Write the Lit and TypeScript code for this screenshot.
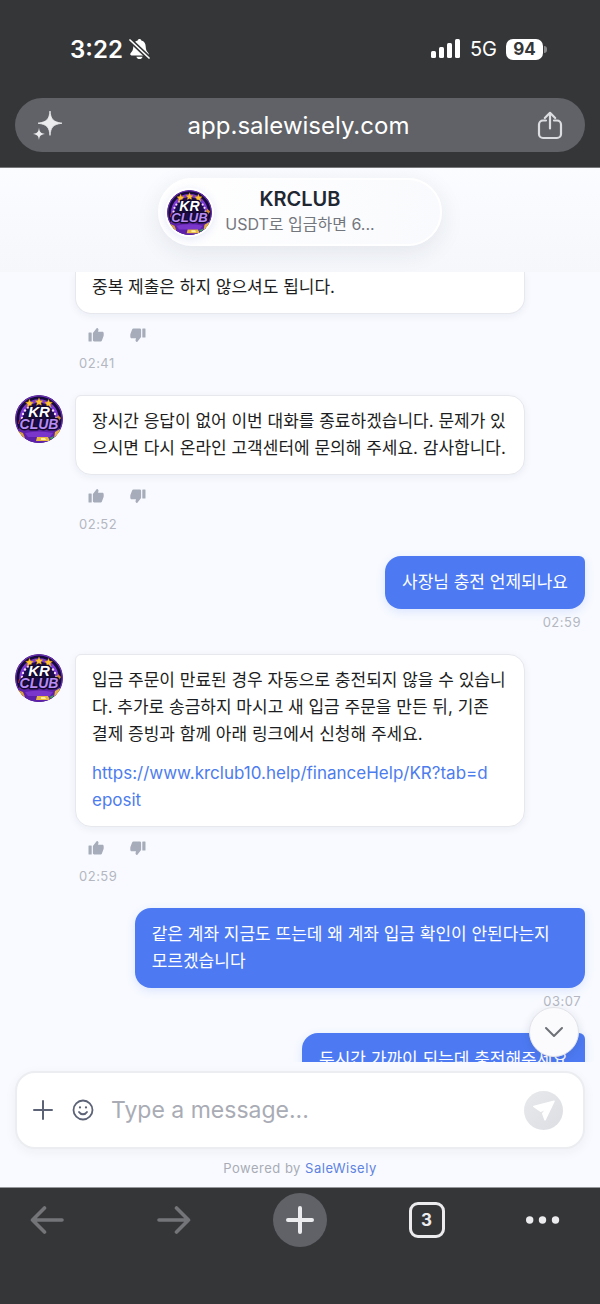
import { LitElement, html, css, svg, nothing } from "lit";
import { customElement, property, state } from "lit/decorators.js";

interface Message {
  from: "agent" | "visitor";
  text: string;
  time?: string;
  link?: string;
  continued?: boolean;
}

const MESSAGES: Message[] = [
  { from: "agent", text: "중복 제출은 하지 않으셔도 됩니다.", time: "02:41", continued: true },
  {
    from: "agent",
    text: "장시간 응답이 없어 이번 대화를 종료하겠습니다. 문제가 있으시면 다시 온라인 고객센터에 문의해 주세요. 감사합니다.",
    time: "02:52",
  },
  { from: "visitor", text: "사장님 충전 언제되나요", time: "02:59" },
  {
    from: "agent",
    text: "입금 주문이 만료된 경우 자동으로 충전되지 않을 수 있습니다. 추가로 송금하지 마시고 새 입금 주문을 만든 뒤, 기존 결제 증빙과 함께 아래 링크에서 신청해 주세요.",
    link: "https://www.krclub10.help/financeHelp/KR?tab=deposit",
    time: "02:59",
  },
  { from: "visitor", text: "같은 계좌 지금도 뜨는데 왜 계좌 입금 확인이 안된다는지 모르겠습니다", time: "03:07" },
  { from: "visitor", text: "두시간 가까이 되는데 충전해주세요" },
];

const base = css`
  :host {
    display: block;
    font-family: Inter, "Noto Sans CJK KR", sans-serif;
  }
  *,
  *::before,
  *::after {
    box-sizing: border-box;
  }
  button {
    display: flex;
    align-items: center;
    justify-content: center;
    padding: 0;
    border: 0;
    background: none;
    color: inherit;
    font: inherit;
    cursor: pointer;
  }
  svg {
    display: block;
    flex: none;
  }
  a {
    text-decoration: none;
  }
`;

/* Round club badge: star row, dotted arch, two-line wordmark. */
@customElement("club-avatar")
export class ClubAvatar extends LitElement {
  static styles = [
    base,
    css`
      .badge {
        width: 100%;
        height: auto;
        border-radius: 50%;
      }
      .word {
        font-family: "Liberation Sans", sans-serif;
        font-weight: 700;
        font-style: italic;
        text-anchor: middle;
        paint-order: stroke;
        stroke-linejoin: round;
      }
      .shade {
        stroke: #150930;
        stroke-width: 4px;
      }
      .top {
        font-size: 15px;
        fill: #fff;
        stroke: #150930;
        stroke-width: 3px;
      }
      .bottom {
        font-size: 14px;
        fill: #b78cf5;
        stroke: #150930;
        stroke-width: 3px;
      }
    `,
  ];

  render() {
    const dots = [
      [7, 27], [7, 23], [8, 19], [10, 15.5], [13, 12.5], [35, 12.5], [38, 15.5], [40, 19], [41, 23], [41, 27],
    ];
    const star = "M0-4.2 1.2-1.5 4-1.2 1.9.7 2.5 3.6 0 2.1-2.5 3.6-1.9.7-4-1.2-1.2-1.5z";
    return html`<svg class="badge" viewBox="0 0 48 48" role="img" aria-label="KRCLUB">
      <circle cx="24" cy="24" r="24" fill="#160a3c" />
      <path d="M6 36V24a18 18 0 0 1 36 0v12" fill="#1d0d4c" stroke="#7d38d2" stroke-width="3.400" />
      <circle cx="24" cy="24" r="23.300" fill="none" stroke="#6a2fb4" stroke-width="1.400" />
      ${dots.map(([x, y]) => svg`<circle cx=${x} cy=${y} r="1.2" fill="#f3d9ff" />`)}
      <path d="M4 35q20-3 40 0l-3 7-8 6H15l-8-6z" fill="#5c21a8" />
      <path d="M10 38q14-3 28 0l-3 4H13z" fill="#7a35cb" />
      <path d="M3 36l5 2 2 5-5-2z" fill="#d9a13a" />
      <path d="M45 34l-5 3-1 6 5-4z" fill="#e2b244" />
      <path d="M43 20l3 3-2 3-3-2z" fill="#d98a2e" />
      <path d="M4 25l3 1v3H3z" fill="#b63545" />
      <path d="M22 42h11l2 4H21z" fill="#e8b83f" />
      <path d="M26 43h4l1 2h-5z" fill="#fff0a0" />
      <path d="M34 43l5-2-2 4z" fill="#3e9a55" />
      ${[[14.5, 8.5], [24, 7], [33.5, 8.5]].map(
        ([x, y]) => svg`<path d=${star} transform="translate(${x} ${y})" fill="#ffc531" stroke="#b8750f" stroke-width=".4" />`,
      )}
      <text class="word top" x="24" y="22">KR</text>
      <text class="word bottom" x="24" y="34">CLUB</text>
    </svg>`;
  }
}

/* Phone status line and the browser's address pill. */
@customElement("browser-top")
export class BrowserTop extends LitElement {
  static styles = [
    base,
    css`
      .top {
        padding: 34px 15px 15px;
        background: #353638;
        color: #fff;
        border-bottom: 1px solid #77787a;
      }
      .status {
        display: flex;
        align-items: center;
        height: 30px;
        padding: 0 38px 0 55px;
      }
      .clock {
        margin-right: 6px;
        font-size: 24px;
        font-weight: 600;
      }
      .right {
        display: flex;
        align-items: center;
        gap: 9px;
        margin-left: auto;
        font-size: 20px;
      }
      .battery {
        display: flex;
        align-items: center;
        gap: 1px;
      }
      .level {
        width: 37px;
        border-radius: 7px;
        background: #fff;
        color: #353638;
        font-size: 17px;
        font-weight: 700;
        line-height: 21px;
        text-align: center;
      }
      .nub {
        width: 3px;
        height: 7px;
        border-radius: 0 3px 3px 0;
        background: #88898b;
      }
      .address {
        display: flex;
        align-items: center;
        justify-content: space-between;
        height: 54px;
        margin-top: 34px;
        padding: 0 20px 0 17px;
        border-radius: 27px;
        background: #606267;
      }
      .url {
        font-size: 24px;
      }
    `,
  ];

  render() {
    return html`<header class="top">
      <div class="status">
        <span class="clock">3:22</span>
        <svg width="21" height="22" viewBox="0 0 21 22" aria-label="Silent">
          <path d="M10.500 1c-.9 0-1.600.6-1.800 1.400C5.600 3.200 4.400 5.500 4.300 8.600c-.1 3-.8 4.600-2.400 6.200-.9.900-1 2.600.6 2.600h16c1.600 0 1.500-1.700.6-2.600-1.600-1.600-2.300-3.200-2.400-6.200-.1-3.100-1.300-5.400-4.400-6.200C12.100 1.600 11.400 1 10.500 1zM7.400 18.800c.4 1.500 1.600 2.300 3.100 2.300s2.700-.8 3.100-2.300z" fill="#fff" />
          <path d="M1 2 20 20" stroke="#353638" stroke-width="4.500" />
          <path d="M1 2 20 20" stroke="#fff" stroke-width="1.700" stroke-linecap="round" />
        </svg>
        <div class="right">
          <svg width="30" height="20" viewBox="0 0 30 20" fill="#fff" aria-label="Signal">
            <rect x="0" y="12" width="5" height="7" rx="1.500" />
            <rect x="8" y="8" width="5" height="11" rx="1.500" />
            <rect x="16" y="4" width="5" height="15" rx="1.500" />
            <rect x="24" y="0" width="5" height="19" rx="1.500" />
          </svg>
          <span>5G</span>
          <span class="battery"><span class="level">94</span><span class="nub"></span></span>
        </div>
      </div>
      <div class="address">
        <button aria-label="Assistant">
          <svg width="30" height="30" viewBox="0 0 30 30" fill="#ececee">
            <path d="M18 1c.9 8 2.500 10.800 12 12.200-9.500 1.400-11.100 4.200-12 12.200-.9-8-2.500-10.800-12-12.200C15.500 11.800 17.100 9 18 1z" stroke="#ececee" stroke-width=".8" />
            <path d="M7 17.500c.5 4.300 1.400 5.700 6 6.400-4.600.7-5.500 2.100-6 6-.5-3.900-1.400-5.300-6-6 4.600-.7 5.500-2.100 6-6.400z" />
          </svg>
        </button>
        <button class="url">app.salewisely.com</button>
        <button aria-label="Share">
          <svg width="30" height="30" viewBox="0 0 30 30" fill="none" stroke="#dcdde0" stroke-width="2.200" stroke-linecap="round" stroke-linejoin="round">
            <path d="M11 10.500H8a4 4 0 0 0-4 4v9.500a4 4 0 0 0 4 4h14a4 4 0 0 0 4-4v-9.500a4 4 0 0 0-4-4h-3" />
            <path d="M15 18.500V3M9.800 8 15 2.800 20.200 8" />
          </svg>
        </button>
      </div>
    </header>`;
  }
}

@customElement("chat-message")
export class ChatMessage extends LitElement {
  @property({ attribute: false }) message!: Message;

  static styles = [
    base,
    css`
      .row {
        display: flex;
        gap: 12px;
      }
      .avatar {
        flex: none;
        width: 48px;
      }
      .body {
        display: flex;
        flex-direction: column;
        align-items: flex-start;
        max-width: 79%;
      }
      .bubble {
        padding: 12px 16px;
        border: 1px solid #e6e8ee;
        border-radius: 6px 16px 16px 16px;
        background: #fff;
        color: #1c1d21;
        font-size: 17px;
        line-height: 27px;
        box-shadow: 0 2px 8px rgba(30, 40, 80, 0.06);
      }
      .bubble p {
        margin: 0;
      }
      .bubble .linkline {
        margin-top: 12px;
        padding-right: 12px;
        word-break: break-all;
      }
      .link {
        color: #4d7cee;
      }
      .continued .body {
        flex: 1;
        flex-basis: 79%;
        flex-grow: 0;
      }
      .continued .bubble {
        align-self: stretch;
        padding-top: 2px;
        border-top: 0;
        border-radius: 0 0 16px 16px;
      }
      .actions {
        display: flex;
        gap: 12px;
        margin: 6px 0 5px 6px;
      }
      .actions button {
        width: 30px;
        height: 30px;
        color: #a6acba;
      }
      .time {
        padding: 0 4px;
        color: #b4b7bf;
        font-size: 13px;
        line-height: 16px;
        letter-spacing: 0.5px;
      }
      .visitor {
        justify-content: flex-end;
      }
      .visitor .body {
        align-items: flex-end;
      }
      .visitor .bubble {
        padding: 13px 17px;
        border: 0;
        border-radius: 16px 6px 16px 16px;
        background: #4d7af2;
        color: #fff;
        box-shadow: 0 3px 10px rgba(77, 122, 242, 0.16);
      }
      .visitor .time {
        margin-top: 5px;
      }
    `,
  ];

  render() {
    const m = this.message;
    const agent = m.from === "agent";
    return html`<article class="row ${m.from} ${m.continued ? "continued" : ""}">
      ${agent ? html`<div class="avatar">${m.continued ? nothing : html`<club-avatar></club-avatar>`}</div>` : nothing}
      <div class="body">
        <div class="bubble">
          <p>${m.text}</p>
          ${m.link ? html`<p class="linkline"><a class="link" href=${m.link}>${m.link}</a></p>` : nothing}
        </div>
        ${agent
          ? html`<div class="actions">
              <button aria-label="Helpful">
                <svg width="16" height="16" viewBox="0 0 16 16" fill="currentColor">
                  <path d="M1 5.500h2.200a.5.500 0 0 1 .5.500v8a.5.500 0 0 1-.5.500H1a.5.500 0 0 1-.5-.5V6a.5.500 0 0 1 .5-.5zM4.900 6 8.600 1.300c.3-.4.800-.4 1.100-.1.600.4.900 1 .8 1.600L10 4.800h4.400c.8 0 1.300.7 1.300 1.500v2c0 .3-.1.600-.2.900l-1.600 4.300c-.2.600-.8 1-1.500 1H6.200c-.8 0-1.300-.6-1.300-1.400z" />
                </svg>
              </button>
              <button aria-label="Not helpful">
                <svg width="16" height="16" viewBox="0 0 16 16" fill="currentColor">
                  <g transform="rotate(180 8 8)">
                    <path d="M1 5.500h2.200a.5.500 0 0 1 .5.500v8a.5.500 0 0 1-.5.500H1a.5.500 0 0 1-.5-.5V6a.5.500 0 0 1 .5-.5zM4.900 6 8.600 1.300c.3-.4.800-.4 1.100-.1.600.4.900 1 .8 1.600L10 4.800h4.400c.8 0 1.300.7 1.300 1.500v2c0 .3-.1.600-.2.900l-1.600 4.300c-.2.600-.8 1-1.500 1H6.200c-.8 0-1.300-.6-1.300-1.400z" />
                  </g>
                </svg>
              </button>
            </div>`
          : nothing}
        ${m.time ? html`<time class="time">${m.time}</time>` : nothing}
      </div>
    </article>`;
  }
}

/* Bottom navigation of the browser. */
@customElement("browser-toolbar")
export class BrowserToolbar extends LitElement {
  static styles = [
    base,
    css`
      .bar {
        display: flex;
        justify-content: space-between;
        padding: 5px 20px 57px;
        border-top: 1px solid #96979a;
        background: #353638;
        color: #ececee;
      }
      .bar button {
        width: 54px;
        height: 54px;
      }
      .bar .dim {
        color: #747578;
      }
      .bar .new {
        border-radius: 50%;
        background: #606267;
      }
      .bar .more {
        justify-content: flex-start;
      }
      .count {
        display: flex;
        align-items: center;
        justify-content: center;
        width: 36px;
        height: 36px;
        border: 3px solid #ececee;
        border-radius: 9px;
        font-size: 17px;
        font-weight: 700;
      }
    `,
  ];

  render() {
    return html`<nav class="bar">
      <button class="dim" aria-label="Back">
        <svg width="34" height="28" viewBox="0 0 34 28" fill="none" stroke="currentColor" stroke-width="3.600" stroke-linecap="round" stroke-linejoin="round">
          <path d="M32 14H2.500M14.500 2 2.500 14l12 12" />
        </svg>
      </button>
      <button class="dim" aria-label="Forward">
        <svg width="34" height="28" viewBox="0 0 34 28" fill="none" stroke="currentColor" stroke-width="3.600" stroke-linecap="round" stroke-linejoin="round">
          <path d="M2 14h29.500M19.500 2l12 12-12 12" />
        </svg>
      </button>
      <button class="new" aria-label="New tab">
        <svg width="28" height="28" viewBox="0 0 28 28" stroke="currentColor" stroke-width="4" stroke-linecap="round">
          <path d="M14 2v24M2 14h24" />
        </svg>
      </button>
      <button aria-label="Tabs"><span class="count">3</span></button>
      <button class="more" aria-label="More">
        <svg width="34" height="8" viewBox="0 0 34 8" fill="currentColor">
          <circle cx="3.700" cy="4" r="3.700" />
          <circle cx="16.500" cy="4" r="3.700" />
          <circle cx="29.500" cy="4" r="3.700" />
        </svg>
      </button>
    </nav>`;
  }
}

@customElement("app-root")
export class AppRoot extends LitElement {
  @state() private draft = "";

  static styles = [
    base,
    css`
      .screen {
        display: flex;
        flex-direction: column;
        height: 100vh;
      }
      .chat {
        display: flex;
        flex: 1;
        flex-direction: column;
        min-height: 0;
        background: #f8faff;
      }
      .head {
        display: flex;
        flex: none;
        justify-content: center;
        padding: 10px 15px 26px;
        background: linear-gradient(#fbfcff, #f5f7fb);
      }
      .card {
        display: flex;
        align-items: center;
        gap: 11px;
        width: 284px;
        height: 68px;
        padding: 0 9px 0 5px;
        border: 2px solid #fff;
        border-radius: 34px;
        background: linear-gradient(100deg, #fff, #f9fafd);
        box-shadow: 0 6px 24px rgba(30, 40, 70, 0.09);
      }
      .logo {
        flex: none;
        width: 49px;
        padding: 2px;
        border-radius: 50%;
        background: #fff;
        box-shadow: 0 2px 8px rgba(77, 100, 200, 0.14);
      }
      .names {
        width: 150px;
        text-align: center;
      }
      .title {
        margin: 0;
        color: #1f2733;
        font-size: 20px;
        font-weight: 600;
        line-height: 25px;
      }
      .subtitle {
        margin: 0;
        color: #73767d;
        font-size: 16px;
        line-height: 25px;
        white-space: nowrap;
      }
      .log {
        position: relative;
        display: flex;
        flex: 1;
        min-height: 0;
      }
      .list {
        display: flex;
        flex: 1;
        flex-direction: column;
        gap: 24px;
        padding: 0 15px;
        overflow: hidden;
      }
      .down {
        position: absolute;
        right: 21px;
        bottom: 5px;
        width: 50px;
        height: 50px;
        border: 1px solid #e1e3e8;
        border-radius: 50%;
        background: #fbfbfd;
        color: #6d7076;
        box-shadow: 0 2px 10px rgba(30, 40, 80, 0.12);
      }
      .foot {
        flex: none;
        padding: 9px 15px;
      }
      .composer {
        display: flex;
        align-items: center;
        height: 78px;
        padding: 0 20px 0 14px;
        border: 2px solid #ebedf0;
        border-radius: 20px;
        background: #fff;
        box-shadow: 0 3px 12px rgba(30, 40, 80, 0.05);
      }
      .tool {
        width: 24px;
        height: 40px;
        margin-right: 16px;
        color: #5d6377;
      }
      .field {
        flex: 1;
        min-width: 0;
        padding: 0;
        border: 0;
        outline: 0;
        background: none;
        color: #1c1d21;
        font-family: inherit;
        font-size: 23px;
        line-height: 30px;
      }
      .field::placeholder {
        color: #a9acb5;
        opacity: 1;
      }
      .send {
        width: 39px;
        height: 39px;
        border-radius: 50%;
        background: linear-gradient(135deg, #e8e9ec, #dcdee3);
      }
      .powered {
        margin: 10px 0 0;
        color: #a9acb5;
        font-size: 13px;
        line-height: 19px;
        letter-spacing: 0.5px;
        text-align: center;
      }
      .powered a {
        color: #5e82e0;
      }
    `,
  ];

  private onInput(e: Event) {
    this.draft = (e.target as HTMLInputElement).value;
  }

  render() {
    return html`<div class="screen">
      <browser-top></browser-top>
      <main class="chat">
        <header class="head">
          <div class="card">
            <div class="logo"><club-avatar></club-avatar></div>
            <div class="names">
              <h1 class="title">KRCLUB</h1>
              <p class="subtitle">USDT로 입금하면 6...</p>
            </div>
          </div>
        </header>
        <section class="log">
          <div class="list">${MESSAGES.map((m) => html`<chat-message .message=${m}></chat-message>`)}</div>
          <button class="down" aria-label="Scroll to latest">
            <svg width="20" height="12" viewBox="0 0 20 12" fill="none" stroke="currentColor" stroke-width="2" stroke-linecap="round" stroke-linejoin="round">
              <path d="M2 2l8 8 8-8" />
            </svg>
          </button>
        </section>
        <footer class="foot">
          <div class="composer">
            <button class="tool" aria-label="Attach">
              <svg width="20" height="20" viewBox="0 0 20 20" stroke="currentColor" stroke-width="2" stroke-linecap="round">
                <path d="M10 1v18M1 10h18" />
              </svg>
            </button>
            <button class="tool" aria-label="Emoji">
              <svg width="22" height="22" viewBox="0 0 22 22" fill="none" stroke="currentColor" stroke-width="1.800" stroke-linecap="round">
                <circle cx="11" cy="11" r="9.500" />
                <path d="M7 13c1.800 3 6.200 3 8 0" />
                <path d="M8 8.300v.2M14 8.300v.2" stroke-width="2.200" />
              </svg>
            </button>
            <input class="field" type="text" aria-label="Message" placeholder="Type a message..." .value=${this.draft} @input=${this.onInput} />
            <button class="send" aria-label="Send">
              <svg width="24" height="24" viewBox="0 0 24 24" fill="#fff" stroke="#fff" stroke-width="1.600" stroke-linejoin="round">
                <path d="M22 3.200 1.800 8.400 8.600 13.200 15 10.200 10.800 15.600 13 21.800z" />
              </svg>
            </button>
          </div>
          <p class="powered">Powered by <a href="https://salewisely.com">SaleWisely</a></p>
        </footer>
      </main>
      <browser-toolbar></browser-toolbar>
    </div>`;
  }
}
